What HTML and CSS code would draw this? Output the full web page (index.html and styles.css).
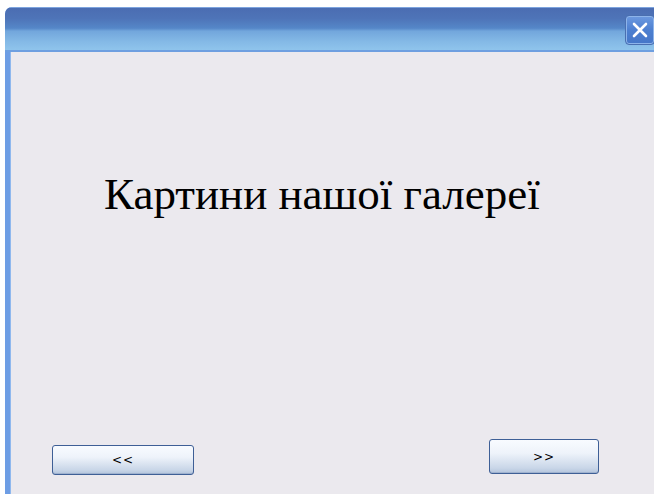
FILE: index.html
```html
<!DOCTYPE html>
<html lang="uk">
<head>
<meta charset="utf-8">
<title>Галерея</title>
<link rel="stylesheet" href="styles.css">
</head>
<body>
<div class="window">
  <div class="titlebar">
    <button class="close" aria-label="Закрити">
      <svg width="18" height="18" viewBox="0 0 18 18"><path d="M3 3 L15 15 M15 3 L3 15" stroke="#fff" stroke-width="2.6" stroke-linecap="round"/></svg>
    </button>
  </div>
  <div class="client">
    <h1 class="heading">Картини нашої галереї</h1>
    <div class="nav">
      <button class="btn btn-prev">&lt;&lt;</button>
      <button class="btn btn-next">&gt;&gt;</button>
    </div>
  </div>
</div>
</body>
</html>
```
FILE: styles.css
```css
html, body {
  margin: 0;
  padding: 0;
  background: #ffffff;
  overflow: hidden;
}

.window {
  margin: 7px 0 0 5px;
  width: 670px;
  height: 500px;
  display: flex;
  flex-direction: column;
  border-top-left-radius: 7px;
  overflow: hidden;
  background: #6d9de4;
}

.titlebar {
  height: 45px;
  flex: none;
  display: flex;
  justify-content: flex-end;
  align-items: flex-start;
  padding-right: 20px;
  box-sizing: border-box;
  border-top: 1px solid #7da4de;
  border-bottom: 2px solid #6e9fe0;
  background: linear-gradient(to bottom,
    #4b6db2 0%, #4e74b8 25%, #5587c8 48%, #72a6dc 55%, #84b9e6 80%, #8fc4ec 100%);
}

.close {
  margin-top: 7px;
  width: 30px;
  height: 30px;
  padding: 0;
  border: 1px solid #4a6fb0;
  border-radius: 4px;
  box-shadow: inset 0 0 0 1px #8db4ea;
  background: linear-gradient(to bottom, #6d9ae0 0%, #4d7fd0 50%, #4676c8 100%);
  display: flex;
  align-items: center;
  justify-content: center;
}

.client {
  flex: 1;
  margin-left: 5px;
  background: #ebe9ee;
  box-shadow: inset 1px 0 0 #8fb8ee;
  display: flex;
  flex-direction: column;
}

.heading {
  margin: 118px 0 0 94px;
  font-family: "Liberation Serif", "Times New Roman", serif;
  font-weight: normal;
  font-size: 45px;
  line-height: 48px;
  color: #000;
}

.nav {
  display: flex;
  align-items: flex-start;
  margin-top: 221px;
  padding-left: 42px;
}

.btn {
  font-family: "DejaVu Sans", sans-serif;
  font-size: 12px;
  letter-spacing: 1px;
  color: #000;
  border: 1px solid #3e5f96;
  border-radius: 3px;
  background: linear-gradient(to bottom, #f8fbff 0%, #eef3fa 40%, #c9d6e8 85%, #b3c4dc 100%);
  box-shadow: inset 0 -1px 0 #9fb2cf;
  padding: 0;
}

.btn-prev {
  width: 142px;
  height: 30px;
  margin-top: 6px;
}

.btn-next {
  width: 110px;
  height: 35px;
  margin-left: 295px;
}
```
